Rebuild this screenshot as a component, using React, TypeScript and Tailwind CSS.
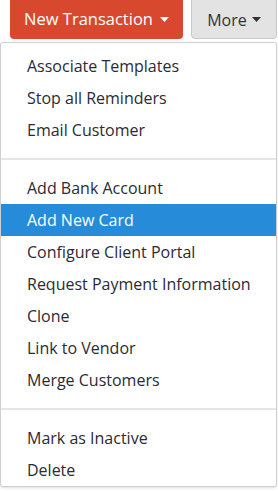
import React from 'react';

function Caret({ className }: { className: string }) {
  return (
    <svg width="9" height="5" viewBox="0 0 9 5" className={className}>
      <path d="M0 0 L9 0 L4.5 5 Z" fill="currentColor" />
    </svg>
  );
}

const groups: string[][] = [
  ['Associate Templates', 'Stop all Reminders', 'Email Customer'],
  [
    'Add Bank Account',
    'Add New Card',
    'Configure Client Portal',
    'Request Payment Information',
    'Clone',
    'Link to Vendor',
    'Merge Customers',
  ],
  ['Mark as Inactive', 'Delete'],
];

export default function App() {
  const active = 'Add New Card';

  return (
    <div className="w-[278px] h-[491px] overflow-hidden bg-white" style={{ fontFamily: '"Open Sans", Lato, sans-serif' }}>
      {/* Toolbar buttons */}
      <div className="flex gap-[8px] pl-[10px] -mt-[4px]">
        <button className="flex items-center justify-center gap-[7px] w-[173px] h-[43px] pt-[4px] rounded-[4px] bg-[#d8482e] text-white text-[16.5px]">
          New Transaction
          <Caret className="text-white" />
        </button>
        <button className="flex items-center justify-center gap-[5px] w-[86px] h-[43px] pt-[4px] rounded-[4px] bg-[#e3e3e3] border border-[#c9c9c9] text-[#333] text-[16px]">
          More
          <Caret className="text-[#333]" />
        </button>
      </div>

      {/* Dropdown menu */}
      <div className="mt-[3px] w-[277px] border border-[#cfcfcf] rounded-[3px] bg-white pt-[7px] shadow-sm">
        {groups.map((items, gi) => (
          <div key={gi}>
            {gi > 0 && <div className="h-[2px] bg-[#e6e6e6] my-[12px]" />}
            {items.map((label) => (
              <div
                key={label}
                className={
                  label === active
                    ? 'h-[32px] flex items-center pl-[26px] text-[16px] bg-[#268bd9] text-white'
                    : 'h-[32px] flex items-center pl-[26px] text-[16px] text-[#2b2b33]'
                }
              >
                {label}
              </div>
            ))}
          </div>
        ))}
      </div>
    </div>
  );
}
